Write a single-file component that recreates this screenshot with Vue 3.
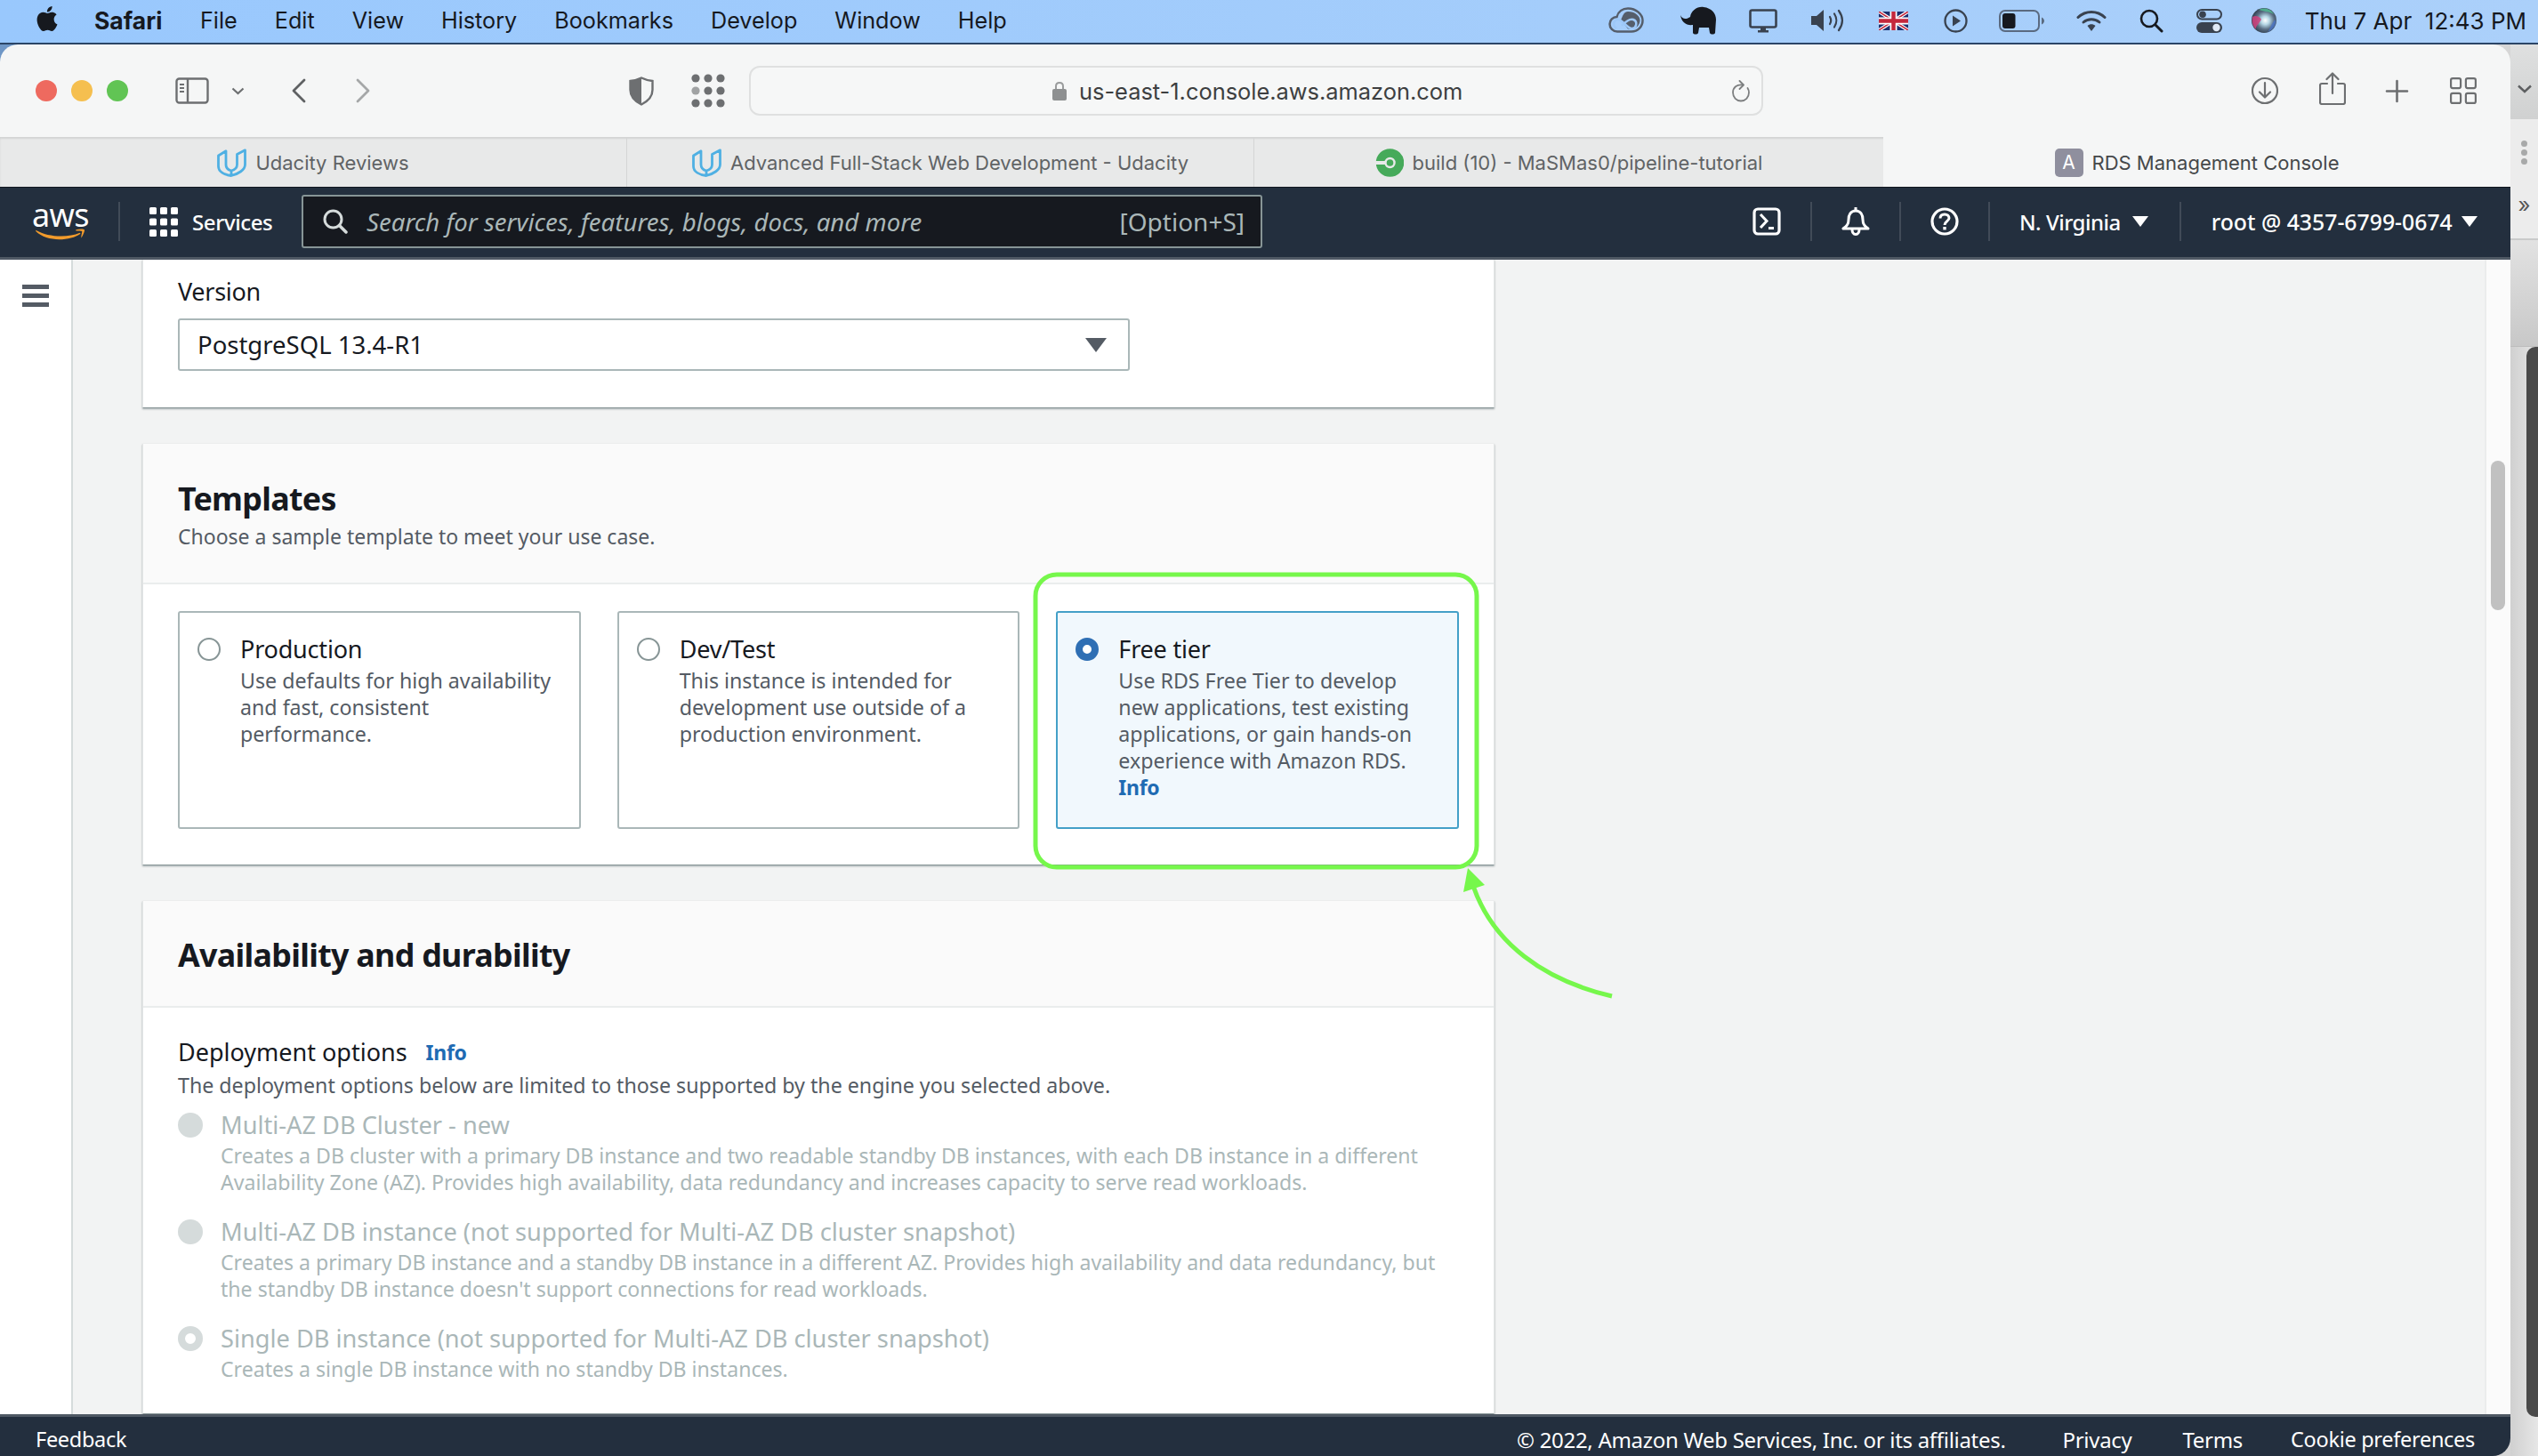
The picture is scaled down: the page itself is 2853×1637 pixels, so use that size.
<script setup>
const menus = ['File', 'Edit', 'View', 'History', 'Bookmarks', 'Develop', 'Window', 'Help']
const tiles = [
  { title: 'Production', lines: ['Use defaults for high availability', 'and fast, consistent', 'performance.'] },
  { title: 'Dev/Test', lines: ['This instance is intended for', 'development use outside of a', 'production environment.'] },
  { title: 'Free tier', lines: ['Use RDS Free Tier to develop', 'new applications, test existing', 'applications, or gain hands-on', 'experience with Amazon RDS.'], info: true, selected: true },
]
const options = [
  { title: 'Multi-AZ DB Cluster - new', lines: ['Creates a DB cluster with a primary DB instance and two readable standby DB instances, with each DB instance in a different', 'Availability Zone (AZ). Provides high availability, data redundancy and increases capacity to serve read workloads.'] },
  { title: 'Multi-AZ DB instance (not supported for Multi-AZ DB cluster snapshot)', lines: ['Creates a primary DB instance and a standby DB instance in a different AZ. Provides high availability and data redundancy, but', "the standby DB instance doesn't support connections for read workloads."] },
  { title: 'Single DB instance (not supported for Multi-AZ DB cluster snapshot)', lines: ['Creates a single DB instance with no standby DB instances.'], on: true },
]
</script>

<template>
  <div class="screen">
    <header class="menubar">
      <svg class="apple" viewBox="0 0 24 24" width="28" height="30"><path fill="#16191f" d="M12.152 6.896c-.948 0-2.415-1.078-3.96-1.04-2.04.027-3.91 1.183-4.961 3.014-2.117 3.675-.546 9.103 1.519 12.09 1.013 1.454 2.208 3.09 3.792 3.039 1.52-.065 2.09-.987 3.935-.987 1.831 0 2.35.987 3.96.948 1.637-.026 2.676-1.48 3.676-2.948 1.156-1.688 1.636-3.325 1.662-3.415-.039-.013-3.182-1.221-3.22-4.857-.026-3.04 2.48-4.494 2.597-4.559-1.429-2.09-3.623-2.324-4.39-2.376-2-.156-3.675 1.09-4.61 1.09zM15.53 3.83c.843-1.012 1.4-2.427 1.245-3.83-1.207.052-2.662.805-3.532 1.818-.78.896-1.454 2.338-1.273 3.714 1.338.104 2.715-.688 3.559-1.701"/></svg>
      <span class="app-name">Safari</span>
      <span v-for="m in menus" :key="m" class="menu-item">{{ m }}</span>
      <div class="status">
        <svg class="st-cc" width="40" height="30" viewBox="0 0 40 30"><path fill="none" stroke="#555e6b" stroke-width="2.5" d="M10 27.500C5 27.500 1.500 23.500 1.500 19C1.500 14.500 5 11 9.500 11C11 5 16 1.500 22 1.500C31 1.500 38.500 8 38.500 15C38.500 22 33 27.500 26 27.500Z"/><path fill="#555e6b" d="M22 5C30 5 35.500 10 35.500 15C35.500 20 31 24.500 26 24.500L22 24.500L14 15C16 9 18 5 22 5Z"/><path fill="none" stroke="#9dc8f8" stroke-width="2.500" d="M9 24C5 22 5 15 10 14C16 13 21 25 27 24C32 23 33 16 28 14C23 12 18 18 15 21"/></svg>
        <svg class="st-el" width="42" height="32" viewBox="0 0 42 32"><path fill="#16191f" d="M1 10C3 15 8 15 12 12C13 5 20 0 27 1C36 2 41 8 41 15L40 30C39 32 35 32 34 30L33 24H22L21 30C20 32 16 32 15 30L15 21C8 22 2 18 1 10Z"/></svg>
        <svg class="st-mon" width="32" height="27" viewBox="0 0 32 27"><rect x="1.500" y="1.500" width="29" height="19" rx="2" fill="none" stroke="#39424f" stroke-width="2.600"/><path fill="#39424f" d="M13 21h6v3h-6zM10 24h12v2.500H10z"/></svg>
        <svg class="st-vol" width="37" height="26" viewBox="0 0 37 26"><path fill="#39424f" d="M0 8H6L14 1V25L6 18H0Z"/><g fill="none" stroke="#39424f" stroke-width="2.200" stroke-linecap="round"><path d="M21 9C22.500 11.500 22.500 14.500 21 17"/><path d="M26 5.500C29 10 29 16 26 20.500"/><path d="M31 2C36 9 36 17 31 24"/></g></svg>
        <svg class="st-flag" width="33" height="21" viewBox="0 0 33 21"><rect width="33" height="21" fill="#1b2f6e"/><path stroke="#fff" stroke-width="4" d="M0 0L33 21M33 0L0 21"/><path stroke="#c4283c" stroke-width="1.500" d="M0 0L33 21M33 0L0 21"/><path stroke="#fff" stroke-width="8" d="M16.500 0V21M0 10.500H33"/><path stroke="#c4283c" stroke-width="4.500" d="M16.500 0V21M0 10.500H33"/></svg>
        <svg class="st-play" width="27" height="27" viewBox="0 0 27 27"><circle cx="13.500" cy="13.500" r="12" fill="none" stroke="#39424f" stroke-width="2.300"/><path fill="#39424f" d="M10 7.500L19 13.500L10 19.500Z"/></svg>
        <svg class="st-bat" width="52" height="25" viewBox="0 0 52 25"><rect x="1" y="1" width="44" height="23" rx="6" fill="none" stroke="#5a6a80" stroke-width="2"/><rect x="4" y="4" width="14.500" height="17" rx="3" fill="#16191f"/><path fill="#5a6a80" d="M48 8.500C50 9.500 51 11 51 12.500C51 14 50 15.500 48 16.500Z"/></svg>
        <svg class="st-wifi" width="34" height="25" viewBox="0 0 34 25"><g fill="none" stroke="#39424f" stroke-width="3" stroke-linecap="round"><path d="M2 8.500C10.500 .5 23.500 .5 32 8.500"/><path d="M8 14C13 9.500 21 9.500 26 14"/></g><path fill="#39424f" d="M12.500 18C15 15.500 19 15.500 21.500 18L17 24Z"/></svg>
        <svg class="st-search" width="27" height="27" viewBox="0 0 27 27"><circle cx="11" cy="11" r="9" fill="none" stroke="#16191f" stroke-width="2.600"/><path stroke="#16191f" stroke-width="3" stroke-linecap="round" d="M18 18L25 25"/></svg>
        <svg class="st-ctl" width="29" height="27" viewBox="0 0 29 27"><rect x="1" y="1" width="27" height="10.500" rx="5.200" fill="none" stroke="#39424f" stroke-width="2"/><circle cx="7" cy="6.200" r="3.800" fill="#39424f"/><rect y="15" width="29" height="12" rx="6" fill="#39424f"/><circle cx="22.500" cy="21" r="4.200" fill="#dfe9f5"/></svg>
        <svg class="st-siri" width="28" height="28" viewBox="0 0 28 28"><defs><radialGradient id="siriGlow" cx="55%" cy="50%" r="55%"><stop offset="0" stop-color="#fff"/><stop offset=".3" stop-color="#b7d8e6"/><stop offset=".65" stop-color="#5b6f85"/><stop offset="1" stop-color="#2f3d4c"/></radialGradient></defs><circle cx="14" cy="14" r="14" fill="url(#siriGlow)"/><path fill="#d0407c" opacity=".85" d="M1 10C4 8 9 9 11 13C8 18 4 21 5 24C1 20 0 15 1 10Z"/><path fill="#50b892" opacity=".85" d="M8 2C14 -1 22 1 25 7C20 4 13 4 8 2Z"/><path fill="#4a76d0" opacity=".7" d="M27 13C28 19 24 25 18 27C22 22 22 17 27 13Z"/></svg>
        <span class="clock">Thu 7 Apr&nbsp;&nbsp;12:43 PM</span>
      </div>
    </header>

    <div class="desk">
      <div class="window">
        <div class="toolbar">
          <span class="light red"></span><span class="light yellow"></span><span class="light green"></span>
          <svg class="tb-side" width="38" height="30" viewBox="0 0 38 30"><rect x="1.500" y="1.500" width="35" height="27" rx="3" fill="none" stroke="#6d6f71" stroke-width="2.400"/><path stroke="#6d6f71" stroke-width="2.400" d="M14 2V28"/><path stroke="#6d6f71" stroke-width="2" d="M5 8h5M5 12h5M5 16h5"/></svg>
          <svg class="tb-drop" width="15" height="9" viewBox="0 0 15 9"><path fill="none" stroke="#6d6f71" stroke-width="2.200" d="M1.500 1.500L7.500 7L13.500 1.500"/></svg>
          <svg class="tb-back" width="17" height="28" viewBox="0 0 17 28"><path fill="none" stroke="#5f6163" stroke-width="2.800" stroke-linecap="round" stroke-linejoin="round" d="M15 2L3 14L15 26"/></svg>
          <svg class="tb-fwd" width="17" height="28" viewBox="0 0 17 28"><path fill="none" stroke="#a5a7a8" stroke-width="2.800" stroke-linecap="round" stroke-linejoin="round" d="M2 2L14 14L2 26"/></svg>
          <svg class="tb-shield" width="28" height="33" viewBox="0 0 28 33"><path fill="none" stroke="#6d6f71" stroke-width="2.400" d="M14 1.500C18 3.500 22 4.500 26.500 5V15C26.500 22 21 28 14 31.500C7 28 1.500 22 1.500 15V5C6 4.500 10 3.500 14 1.500Z"/><path fill="#6d6f71" d="M14 1.500C10 3.500 6 4.500 1.500 5V15C1.500 22 7 28 14 31.500Z"/></svg>
          <svg class="tb-grid" width="38" height="38" viewBox="0 0 38 38"><g fill="#6d6f71"><circle cx="5" cy="5" r="4.600"/><circle cx="19" cy="5" r="4.600"/><circle cx="33" cy="5" r="4.600"/><circle cx="5" cy="19" r="4.600" fill="#a0a2a3"/><circle cx="19" cy="19" r="4.600"/><circle cx="33" cy="19" r="4.600"/><circle cx="5" cy="33" r="4.600"/><circle cx="19" cy="33" r="4.600"/><circle cx="33" cy="33" r="4.600"/></g></svg>
          <div class="urlbar">
            <svg class="lock" width="16" height="22" viewBox="0 0 16 22"><path fill="none" stroke="#9a9c9d" stroke-width="2" d="M4 10V6C4 3.500 5.500 2 8 2C10.500 2 12 3.500 12 6V10"/><rect y="9" width="16" height="13" rx="2" fill="#8e9091"/></svg>
            <span class="url">us-east-1.console.aws.amazon.com</span>
            <svg class="reload" width="22" height="25" viewBox="0 0 22 25"><path fill="none" stroke="#7d7f80" stroke-width="1.800" stroke-linecap="round" d="M13 5.500C6.500 4.500 2 8.500 2 14C2 19.500 6 23.500 11 23.500C16 23.500 20 19.500 20 14C20 12 19.500 10.500 18.500 9"/><path fill="none" stroke="#7d7f80" stroke-width="1.800" stroke-linecap="round" stroke-linejoin="round" d="M9.500 1L14 5.500L9.500 10"/></svg>
          </div>
          <div class="tb-right">
            <svg width="30" height="34" viewBox="0 0 30 34"><circle cx="15" cy="17" r="14" fill="none" stroke="#6d6f71" stroke-width="2.200"/><path fill="none" stroke="#6d6f71" stroke-width="2.200" stroke-linecap="round" stroke-linejoin="round" d="M15 8V24M9 18.500L15 24.500L21 18.500"/></svg>
            <svg class="tb-share" width="30" height="37" viewBox="0 0 30 37"><path fill="none" stroke="#6d6f71" stroke-width="2.200" stroke-linecap="round" stroke-linejoin="round" d="M9 13H3C1.800 13 1 13.800 1 15V34C1 35.200 1.800 36 3 36H27C28.200 36 29 35.200 29 34V15C29 13.800 28.200 13 27 13H21M15 24V2M8.500 8L15 1.500L21.500 8"/></svg>
            <svg class="tb-plus" width="27" height="27" viewBox="0 0 27 27"><path stroke="#6d6f71" stroke-width="2.600" stroke-linecap="round" d="M13.500 2V25M2 13.500H25"/></svg>
            <svg class="tb-tabs" width="30" height="30" viewBox="0 0 30 30"><g fill="none" stroke="#6d6f71" stroke-width="2.200"><rect x="1.100" y="1.100" width="11" height="11" rx="2"/><rect x="17.900" y="1.100" width="11" height="11" rx="2"/><rect x="1.100" y="17.900" width="11" height="11" rx="2"/><rect x="17.900" y="17.900" width="11" height="11" rx="2"/></g></svg>
          </div>
        </div>

        <div class="tabs">
          <div class="tab">
            <svg width="33" height="32" viewBox="0 0 33 32"><path fill="none" stroke="#4fb0e3" stroke-width="2.800" stroke-linejoin="round" d="M1.500 8V20C1.500 26 8 29.500 16 30.500C24 28.500 31.500 24 31.500 18V1.800L22.500 6.500V18C22.500 22 20 24 16 25C12 24 10 22 10 18V2.800ZM16 30.500V25"/></svg>
            <span>Udacity Reviews</span>
          </div>
          <div class="tab">
            <svg width="33" height="32" viewBox="0 0 33 32"><path fill="none" stroke="#4fb0e3" stroke-width="2.800" stroke-linejoin="round" d="M1.500 8V20C1.500 26 8 29.500 16 30.500C24 28.500 31.500 24 31.500 18V1.800L22.500 6.500V18C22.500 22 20 24 16 25C12 24 10 22 10 18V2.800ZM16 30.500V25"/></svg>
            <span>Advanced Full-Stack Web Development - Udacity</span>
          </div>
          <div class="tab tab-last">
            <svg width="32" height="32" viewBox="0 0 32 32"><circle cx="16.500" cy="16" r="11" fill="none" stroke="#46aa5a" stroke-width="9.500"/><circle cx="16.500" cy="16" r="3.800" fill="#46aa5a"/><rect x="0" y="14" width="11" height="4" fill="#e8e9e9"/></svg>
            <span>build (10) - MaSMas0/pipeline-tutorial</span>
          </div>
          <div class="tab tab-active">
            <span class="tab-badge">A</span>
            <span>RDS Management Console</span>
          </div>
        </div>

        <nav class="awsnav">
          <div class="aws-logo">
            <span class="aws-word">aws</span>
            <svg width="64" height="15" viewBox="0 0 64 15"><path fill="#f29b2c" d="M0 2C16 11.500 42 12 57 5.500L58 6.500C44 16.500 14 17.500 0 3.500ZM52 1.500C56 .5 62 0 63 1.500C64 3 61 9 59 12C58.500 10 60 6 60 3.500C59 3 55 3 52 3Z"/></svg>
          </div>
          <span class="nav-sep sep-logo"></span>
          <svg class="nav-grid" width="32" height="33" viewBox="0 0 32 33"><g fill="#fff"><rect width="8" height="8" rx="1.500"/><rect x="12" width="8" height="8" rx="1.500"/><rect x="24" width="8" height="8" rx="1.500"/><rect y="12.500" width="8" height="8" rx="1.500"/><rect x="12" y="12.500" width="8" height="8" rx="1.500"/><rect x="24" y="12.500" width="8" height="8" rx="1.500"/><rect y="25" width="8" height="8" rx="1.500"/><rect x="12" y="25" width="8" height="8" rx="1.500"/><rect x="24" y="25" width="8" height="8" rx="1.500"/></g></svg>
          <span class="nav-services">Services</span>
          <div class="search">
            <svg width="28" height="28" viewBox="0 0 28 28"><circle cx="11.500" cy="11.500" r="9.500" fill="none" stroke="#d5dbdb" stroke-width="3"/><path stroke="#d5dbdb" stroke-width="3.500" stroke-linecap="round" d="M18.500 18.500L26 26"/></svg>
            <span class="search-text">Search for services, features, blogs, docs, and more</span>
            <span class="search-key">[Option+S]</span>
          </div>
          <svg class="nav-term" width="32" height="32" viewBox="0 0 32 32"><rect x="2" y="2" width="28" height="28" rx="4" fill="none" stroke="#fff" stroke-width="3.200"/><path fill="none" stroke="#fff" stroke-width="3" d="M9 8L16 15.500L9 23"/><path stroke="#fff" stroke-width="3" d="M18 23.500H24"/></svg>
          <span class="nav-sep"></span>
          <svg class="nav-icon" width="32" height="33" viewBox="0 0 32 33"><path fill="none" stroke="#fff" stroke-width="3" stroke-linejoin="round" d="M16 4C10.500 4 8 8.500 8 14C8 19 6 21 2 24H30C26 21 24 19 24 14C24 8.500 21.500 4 16 4Z"/><path stroke="#fff" stroke-width="3" d="M16 0V4"/><path fill="none" stroke="#fff" stroke-width="3" d="M12 25C12 28 13.500 30.500 16 30.500C18.500 30.500 20 28 20 25"/></svg>
          <span class="nav-sep"></span>
          <svg class="nav-icon" width="32" height="32" viewBox="0 0 32 32"><circle cx="16" cy="16" r="14" fill="none" stroke="#fff" stroke-width="3.200"/><path fill="none" stroke="#fff" stroke-width="3" d="M11 12.500C11 9.500 13 8 16 8C19 8 21 9.800 21 12.300C21 15.500 16 16 16 20"/><rect x="14.300" y="22" width="3.400" height="3.400" fill="#fff"/></svg>
          <span class="nav-sep"></span>
          <span class="nav-text nav-region">N. Virginia</span><span class="caret"></span>
          <span class="nav-sep sep-acct"></span>
          <span class="nav-text nav-root">root @ 4357-6799-0674</span><span class="caret"></span>
        </nav>

        <div class="main">
          <aside class="sidebar">
            <span class="burger"></span><span class="burger"></span><span class="burger"></span>
          </aside>
          <div class="content">
            <section class="card version-card">
              <div class="field-label">Version</div>
              <div class="select">
                <span>PostgreSQL 13.4-R1</span>
                <span class="select-caret"></span>
              </div>
            </section>

            <section class="card">
              <div class="card-head templates-head">
                <h2>Templates</h2>
                <p class="muted">Choose a sample template to meet your use case.</p>
              </div>
              <div class="tiles">
                <div v-for="t in tiles" :key="t.title" class="tile" :class="{ selected: t.selected }">
                  <span class="radio" :class="{ 'radio-on': t.selected }"></span>
                  <div class="tile-copy">
                    <div class="tile-title">{{ t.title }}</div>
                    <p v-for="l in t.lines" :key="l" class="muted">{{ l }}</p>
                    <a v-if="t.info" class="info">Info</a>
                  </div>
                </div>
              </div>
            </section>

            <section class="card avail-card">
              <div class="card-head avail-head"><h2>Availability and durability</h2></div>
              <div class="avail-body">
                <div class="deploy-label">Deployment options <a class="info info-gap">Info</a></div>
                <p class="muted deploy-sub">The deployment options below are limited to those supported by the engine you selected above.</p>
                <div v-for="o in options" :key="o.title" class="option">
                  <span class="dis-radio" :class="{ 'dis-on': o.on }"></span>
                  <div>
                    <div class="option-title">{{ o.title }}</div>
                    <p v-for="l in o.lines" :key="l" class="option-desc">{{ l }}</p>
                  </div>
                </div>
              </div>
            </section>
          </div>
          <div class="gutter"></div>
          <span class="thumb"></span>
        </div>

        <footer class="footer">
          <span class="fb">Feedback</span>
          <span class="copy">© 2022, Amazon Web Services, Inc. or its affiliates.</span>
          <span class="f-privacy">Privacy</span>
          <span class="f-terms">Terms</span>
          <span class="f-cookie">Cookie preferences</span>
        </footer>
      </div>

      <div class="side">
        <div class="side-a"><svg width="16" height="10" viewBox="0 0 16 10"><path fill="none" stroke="#5d5f61" stroke-width="2.400" d="M1 1.500L8 8L15 1.500"/></svg></div>
        <div class="side-b">
          <i class="dot"></i><i class="dot"></i><i class="dot"></i>
          <span class="side-more">»</span>
        </div>
        <div class="side-c"></div>
        <div class="side-d"><span class="side-thumb"></span></div>
      </div>
    </div>

    <svg class="annot" width="2853" height="1637" viewBox="0 0 2853 1637">
      <rect x="1164" y="646" width="496" height="329" rx="24" fill="none" stroke="#76f74b" stroke-width="5"/>
      <path fill="none" stroke="#76f74b" stroke-width="5" d="M1812 1120C1735 1102 1678 1060 1656 996"/>
      <path fill="#76f74b" d="M1650 976L1669 995L1645 1003Z"/>
    </svg>
  </div>
</template>

<style>
html, body { margin: 0; padding: 0; background: #d8d8d8; }
</style>

<style scoped>
* { box-sizing: border-box; }
.screen { position: relative; width: 2853px; height: 1637px; overflow: hidden; display: flex; flex-direction: column; font-family: "Noto Sans", sans-serif; color: #16191f; }
p, h2 { margin: 0; }

.menubar { height: 50px; flex: none; display: flex; align-items: center; padding: 0 13px 2px 39px; background: linear-gradient(90deg, #99c8fd, #abd0fa); border-bottom: 2px solid #2b4566; font-family: Inter, sans-serif; font-size: 25.200px; }
.apple { margin-bottom: 4px; }
.app-name { margin-left: 39px; font-weight: 700; width: 77px; font-size: 26.500px; white-space: nowrap; }
.menu-item { margin-left: 42px; }
.status { margin-left: auto; display: flex; align-items: center; }
.status svg { flex: none; }
.st-el { margin-left: 40px; }
.st-mon { margin-left: 36px; }
.st-vol { margin-left: 38px; }
.st-flag { margin-left: 39px; }
.st-play { margin-left: 40px; }
.st-bat { margin-left: 35px; }
.st-wifi { margin-left: 35px; }
.st-search { margin-left: 37px; }
.st-ctl { margin-left: 37px; }
.st-siri { margin-left: 33px; }
.clock { margin-left: 32px; white-space: nowrap; font-size: 26px; }

.desk { flex: 1; min-height: 0; display: flex; background: linear-gradient(90deg, #6f97c6 50%, #d6d6d6 50%); }
.window { width: 2822px; flex: none; display: flex; flex-direction: column; border-radius: 20px 20px 20px 0; overflow: hidden; }

.toolbar { height: 104px; flex: none; display: flex; align-items: center; padding-left: 40px; background: #f5f6f6; }
.light { width: 24px; height: 24px; border-radius: 50%; margin-right: 16px; }
.red { background: #ee6a5f; }
.yellow { background: #f5bf4f; }
.green { background: #61c454; }
.tb-side { margin-left: 37px; }
.tb-drop { margin-left: 25px; }
.tb-back { margin-left: 52px; }
.tb-fwd { margin-left: 56px; }
.tb-shield { margin-left: 290px; }
.tb-grid { margin-left: 42px; }
.urlbar { margin-left: 27px; width: 1140px; height: 56px; border: 2px solid #dfe0e0; border-radius: 12px; display: flex; align-items: center; padding-left: 339px; background: #f6f7f7; }
.url { margin-left: 14px; font-family: Inter, sans-serif; font-size: 25.400px; color: #3d3f41; white-space: nowrap; }
.reload { margin-left: auto; margin-right: 12px; }
.tb-right { margin-left: auto; margin-right: 38px; display: flex; align-items: center; }
.tb-share { margin-left: 46px; margin-bottom: 6px; }
.tb-plus { margin-left: 44px; }
.tb-tabs { margin-left: 46px; }

.tabs { height: 56px; flex: none; display: flex; background: #e8e9e9; font-family: Inter, sans-serif; font-size: 22px; color: #606365; box-shadow: inset 0 2px 2px #d3d4d4; }
.tab { width: 705px; display: flex; align-items: center; justify-content: center; gap: 10px; padding-top: 1px; border-right: 1px solid #d4d5d5; white-space: nowrap; }
.tab-last { width: 707px; border-right: 0; }
.tab-active { width: 705px; border-right: 0; background: #f5f6f6; box-shadow: none; color: #45484a; gap: 10px; }
.tab-badge { width: 32px; height: 32px; border-radius: 5px; background: #8f8f9e; color: #fff; font-size: 21px; display: flex; align-items: center; justify-content: center; }

.awsnav { height: 82px; flex: none; display: flex; align-items: center; padding: 0 0 2px 36px; background: #232f3e; border-top: 1px solid #10161f; border-bottom: 3px solid #4f5964; color: #fff; font-size: 24px; }
.aws-logo { width: 64px; display: flex; flex-direction: column; align-items: center; height: 42px; }
.aws-word { font-size: 36px; line-height: 28px; font-weight: 400; letter-spacing: -.5px; }
.aws-logo svg { margin-top: 1px; }
.nav-sep { width: 2px; height: 44px; background: #414b58; margin: 0 33px; flex: none; }
.sep-logo { margin: 0 0 0 33px; }
.nav-grid { margin-left: 33px; flex: none; }
.nav-services { margin-left: 16px; width: 89px; font-weight: 500; white-space: nowrap; letter-spacing: -.4px; flex: none; }
.search { margin-left: 34px; width: 1080px; height: 60px; flex: none; background: #16191f; border: 2px solid #879596; border-radius: 3px; display: flex; align-items: center; padding: 0 18px 0 22px; color: #aab7b8; }
.search-text { margin-left: 21px; font-style: italic; font-size: 27.600px; white-space: nowrap; }
.search-key { margin-left: auto; font-size: 28px; }
.nav-term { margin-left: 551px; flex: none; }
.nav-icon { flex: none; }
.nav-text { white-space: nowrap; font-weight: 500; flex: none; }
.nav-region { letter-spacing: -.5px; margin-right: 13px; }
.nav-root { font-size: 24.800px; margin-right: 10px; }
.caret { width: 0; height: 0; border-left: 9px solid transparent; border-right: 9px solid transparent; border-top: 12px solid #fff; flex: none; }
.sep-acct { margin: 0 34px 0 35px; }

.main { position: relative; flex: 1; min-height: 0; display: flex; background: #f2f3f3; overflow: hidden; }
.sidebar { width: 82px; flex: none; background: #fff; border-right: 2px solid #d5dbdb; padding: 28px 0 0 25px; display: flex; flex-direction: column; gap: 5px; }
.burger { width: 30px; height: 5px; background: #545b64; }
.content { width: 1520px; margin-left: 78px; flex: none; display: flex; flex-direction: column; gap: 40px; }
.gutter { width: 29px; margin-left: auto; flex: none; background: #fbfbfb; border-left: 2px solid #ebecec; }
.thumb { position: absolute; right: 6px; top: 226px; width: 16px; height: 168px; border-radius: 8px; background: #c1c1c1; }

.card { flex: none; background: #fff; border-left: 1px solid #e4e6e6; border-right: 1px solid #e4e6e6; border-bottom: 1px solid #879596; box-shadow: 0 1px 2px rgba(0, 28, 36, .35); }
.version-card { padding: 16px 39px 41px; }
.field-label { font-size: 27px; line-height: 40px; letter-spacing: -.3px; }
.select { margin-top: 10px; width: 1070px; height: 59px; border: 2px solid #aab7b8; border-radius: 3px; display: flex; align-items: center; justify-content: space-between; padding: 0 12px 0 20px; font-size: 27.500px; }
.select-caret { width: 0; height: 0; border-left: 12px solid transparent; border-right: 12px solid transparent; border-top: 16px solid #545b64; margin-right: 12px; }

.card-head { background: #fafafa; border-bottom: 2px solid #eaeded; padding-left: 39px; }
.templates-head { padding-top: 41px; padding-bottom: 37px; }
h2 { font-size: 35.800px; line-height: 40px; font-weight: 700; letter-spacing: -.7px; }
.muted { font-size: 23px; line-height: 30px; color: #545b64; white-space: nowrap; }
.tile .muted { font-size: 23.200px; }
.deploy-sub { font-size: 23.200px; }
.templates-head .muted { margin-top: 8px; }
.tiles { display: flex; gap: 41px; padding: 30px 39px 40px; }
.tile { flex: 1; height: 245px; display: flex; border: 2px solid #aab7b8; border-radius: 3px; padding: 26px 0 0 20px; background: #fff; }
.tile.selected { background: #f1f8fd; border-color: #44a0c8; }
.radio { width: 26px; height: 26px; margin-top: 2px; border-radius: 50%; border: 2px solid #879596; background: #fff; flex: none; }
.radio-on { border: 8px solid #2f6fb4; }
.tile-copy { margin-left: 22px; }
.tile-title { font-size: 27px; line-height: 30px; margin-bottom: 5px; letter-spacing: -.2px; }
.info { display: block; font-size: 23px; line-height: 30px; font-weight: 700; color: #1f6bb3; letter-spacing: -.3px; }

.avail-card { flex: 1; }
.avail-head { height: 120px; padding-top: 40px; }
.avail-body { padding: 32px 39px; }
.deploy-label { font-size: 27px; line-height: 36px; display: flex; align-items: center; }
.info-gap { margin-left: 21px; }
.deploy-sub { margin-top: 4px; }
.option { display: flex; margin-top: 15px; }
.option + .option { margin-top: 26px; }
.dis-radio { width: 28px; height: 28px; border-radius: 50%; background: #d5dbdb; flex: none; margin: 1px 20px 0 0; }
.dis-on { border: 8px solid #d5dbdb; background: #fff; }
.option-title { font-size: 27.200px; line-height: 30px; color: #aab7b8; margin-bottom: 4px; white-space: nowrap; }
.option-desc { font-size: 23.100px; line-height: 30px; color: #aab7b8; white-space: nowrap; }

.footer { height: 47px; flex: none; display: flex; align-items: center; background: #232f3e; border-top: 3px solid #4f5964; color: #fff; font-size: 23.500px; padding: 6px 40px 0 40px; letter-spacing: -.3px; white-space: nowrap; }
.copy { margin-left: auto; font-size: 24px; }
.f-privacy { margin-left: 64px; font-size: 24px; }
.f-terms { margin-left: 57px; font-size: 24px; }
.f-cookie { margin-left: 54px; }

.side { flex: 1; display: flex; flex-direction: column; }
.side-a { height: 84px; flex: none; background: linear-gradient(#dfe0e0, #d0d1d1); display: flex; justify-content: center; align-items: center; padding-top: 16px; }
.side-b { height: 136px; flex: none; background: #ececec; border-bottom: 2px solid #c9caca; display: flex; flex-direction: column; align-items: center; padding-top: 24px; gap: 3px; }
.dot { width: 7px; height: 7px; border-radius: 50%; background: #a8a9a9; }
.side-more { margin-top: 33px; font-family: Inter, sans-serif; font-size: 24px; line-height: 20px; color: #555; }
.side-c { height: 120px; flex: none; background: linear-gradient(#e2e2e2, #c8c8c8); border-bottom: 1px solid #bdbdbd; }
.side-d { flex: 1; background: linear-gradient(90deg, #d0d0d0, #e6e6e6); display: flex; justify-content: flex-end; }
.side-thumb { width: 13px; height: 1203px; border-radius: 10px 0 0 10px; background: #4a4a4a; }

.annot { position: absolute; left: 0; top: 0; pointer-events: none; }
</style>
